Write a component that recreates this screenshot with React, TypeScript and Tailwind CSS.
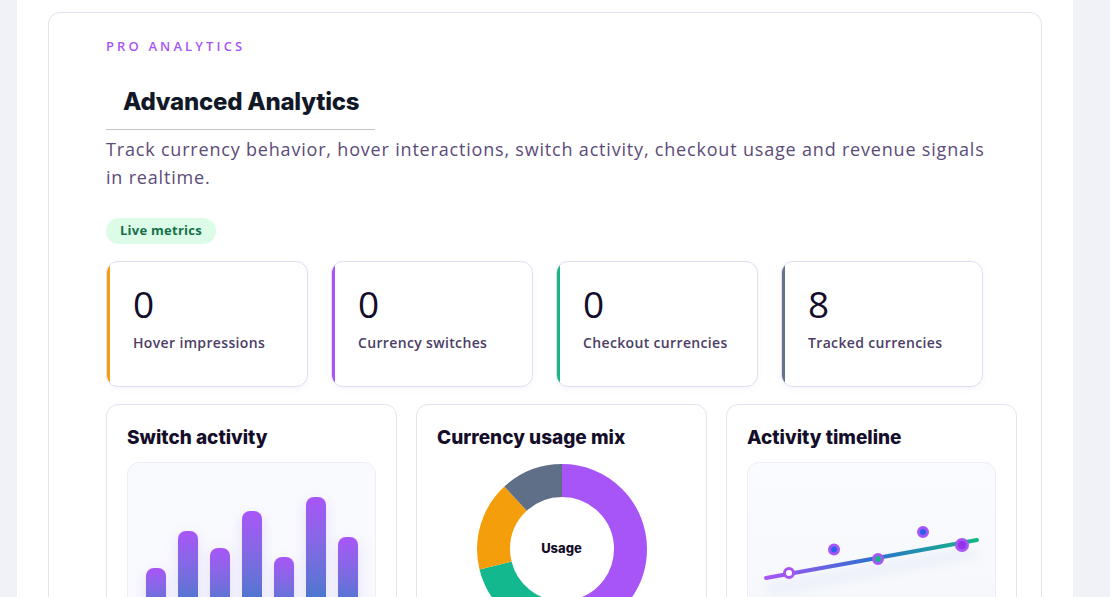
import React from "react";

const body = { fontFamily: '"Open Sans", "Liberation Sans", sans-serif' };
const head = { fontFamily: 'Inter, "Liberation Sans", sans-serif' };

const metrics = [
  { value: "0", label: "Hover impressions", bar: "bg-[#f59e0b]" },
  { value: "0", label: "Currency switches", bar: "bg-[#a855f7]" },
  { value: "0", label: "Checkout currencies", bar: "bg-[#10b981]" },
  { value: "8", label: "Tracked currencies", bar: "bg-[#64748b]" },
];

const bars = [52, 89, 72, 109, 63, 123, 83];

function MetricCard({ value, label, bar }: { value: string; label: string; bar: string }) {
  return (
    <div className="relative w-[202px] h-[126px] rounded-[12px] border border-[#e4dcf3] bg-white overflow-hidden shadow-[0_2px_6px_rgba(120,90,200,0.06)]">
      <div className={`absolute left-0 top-0 bottom-0 w-[3px] ${bar}`} />
      <div className="pl-[26px] pt-[18px]">
        <div className="text-[37px] leading-[48px] text-[#140c2b]" style={body}>
          {value}
        </div>
        <div className="mt-[5px] text-[14px] leading-[20px] font-semibold tracking-[0.025em] text-[#4b3d66]" style={body}>
          {label}
        </div>
      </div>
    </div>
  );
}

function ChartCard({ title, children }: { title: string; children: React.ReactNode }) {
  return (
    <div className="w-[291px] h-[260px] rounded-[12px] border border-[#dfe5ef] bg-white px-[20px] pt-[20px]">
      <div className="text-[19px] leading-[25px] font-extrabold tracking-normal text-[#150e2a]" style={head}>
        {title}
      </div>
      {children}
    </div>
  );
}

function Donut() {
  const r = 68.5;
  const c = 2 * Math.PI * r;
  const segs = [
    { p: 0.45, color: "#a855f7" },
    { p: 0.26, color: "#14b88f" },
    { p: 0.17, color: "#f59e0b" },
    { p: 0.12, color: "#5f6f87" },
  ];
  let off = 0;
  return (
    <div className="relative mx-auto mt-[14px] w-[170px] h-[170px]">
      <svg width="170" height="170" viewBox="0 0 170 170">
        <g transform="rotate(-90 85 85)">
          {segs.map((s, i) => {
            const len = s.p * c;
            const el = (
              <circle
                key={i}
                cx="85"
                cy="85"
                r={r}
                fill="none"
                stroke={s.color}
                strokeWidth="33"
                strokeDasharray={`${len} ${c - len}`}
                strokeDashoffset={-off}
              />
            );
            off += len;
            return el;
          })}
        </g>
      </svg>
      <div className="absolute inset-0 flex items-center justify-center">
        <span className="text-[13px] font-extrabold text-[#150e2a]" style={head}>
          Usage
        </span>
      </div>
    </div>
  );
}

function Timeline() {
  return (
    <div className="mt-[12px] h-[200px] rounded-[12px] border border-[#eceff6] bg-gradient-to-b from-[#fafbfe] to-[#f4f7fb] overflow-hidden">
      <svg width="248" height="200" viewBox="0 0 248 200">
        <defs>
          <linearGradient id="tl" x1="0" y1="0" x2="1" y2="0">
            <stop offset="0" stopColor="#a855f7" />
            <stop offset="0.5" stopColor="#2f6fd0" />
            <stop offset="1" stopColor="#10b981" />
          </linearGradient>
          <filter id="blur" x="-20%" y="-200%" width="140%" height="500%">
            <feGaussianBlur stdDeviation="6" />
          </filter>
        </defs>
        <line x1="18" y1="127" x2="229" y2="89" stroke="#c9d3ea" strokeWidth="8" opacity="0.35" filter="url(#blur)" />
        <line x1="18" y1="115" x2="229" y2="77" stroke="url(#tl)" strokeWidth="4" strokeLinecap="round" />
        <circle cx="41" cy="110" r="4.5" fill="#ffffff" stroke="#a855f7" strokeWidth="3" />
        <circle cx="86" cy="86.5" r="4.5" fill="#2563eb" stroke="#a855f7" strokeWidth="3" />
        <circle cx="130" cy="96" r="4.5" fill="#10b981" stroke="#a855f7" strokeWidth="3" />
        <circle cx="175" cy="69" r="4.5" fill="#2563eb" stroke="#a855f7" strokeWidth="3" />
        <circle cx="214" cy="82" r="5.5" fill="#9333ea" stroke="#a855f7" strokeWidth="3" />
      </svg>
    </div>
  );
}

function Bars() {
  return (
    <div className="mt-[12px] h-[200px] rounded-[12px] border border-[#eceff6] bg-[#f9fafe] flex items-end justify-center gap-[12px] pb-[40px]">
      {bars.map((h, i) => (
        <div
          key={i}
          className="w-[20px] rounded-t-[8px] bg-gradient-to-b from-[#a855f7] to-[#1f7bc6] shadow-[0_4px_14px_rgba(140,90,230,0.18)]"
          style={{ height: h + 1 }}
        />
      ))}
    </div>
  );
}

export default function App() {
  return (
    <div className="w-[1110px] h-[597px] overflow-hidden bg-[#f0f2f7] pl-[17px]" style={body}>
      <div className="w-[1056px] h-[597px] bg-white pt-[12px] pl-[31px]">
        <div className="w-[994px] h-[640px] rounded-[12px] border border-[#dde4ef] bg-white pl-[57px] pt-[24px]">
          <div className="text-[13px] leading-[18px] font-semibold tracking-[0.24em] text-[#a855f7]" style={body}>
            PRO ANALYTICS
          </div>
          <div className="mt-[30px] inline-block border-b border-[#c3c4c7] pl-[17px] pr-[16px] pb-[10px]">
            <h2 className="text-[24px] leading-[34px] font-extrabold tracking-[-0.01em] text-[#111827]" style={head}>
              Advanced Analytics
            </h2>
          </div>
          <p className="mt-[5px] w-[890px] text-[18px] leading-[28px] tracking-[0.045em] text-[#5b4b78]" style={body}>
            Track currency behavior, hover interactions, switch activity, checkout usage and revenue signals in realtime.
          </p>
          <div className="mt-[27px] inline-flex h-[26px] items-center rounded-full bg-[#dcfce7] px-[14px] text-[13px] font-bold tracking-[0.02em] text-[#16704a]" style={body}>
            Live metrics
          </div>
          <div className="mt-[17px] flex gap-[23px]">
            {metrics.map((m) => (
              <MetricCard key={m.label} {...m} />
            ))}
          </div>
          <div className="mt-[17px] flex gap-[19px]">
            <ChartCard title="Switch activity">
              <Bars />
            </ChartCard>
            <ChartCard title="Currency usage mix">
              <Donut />
            </ChartCard>
            <ChartCard title="Activity timeline">
              <Timeline />
            </ChartCard>
          </div>
        </div>
      </div>
    </div>
  );
}
